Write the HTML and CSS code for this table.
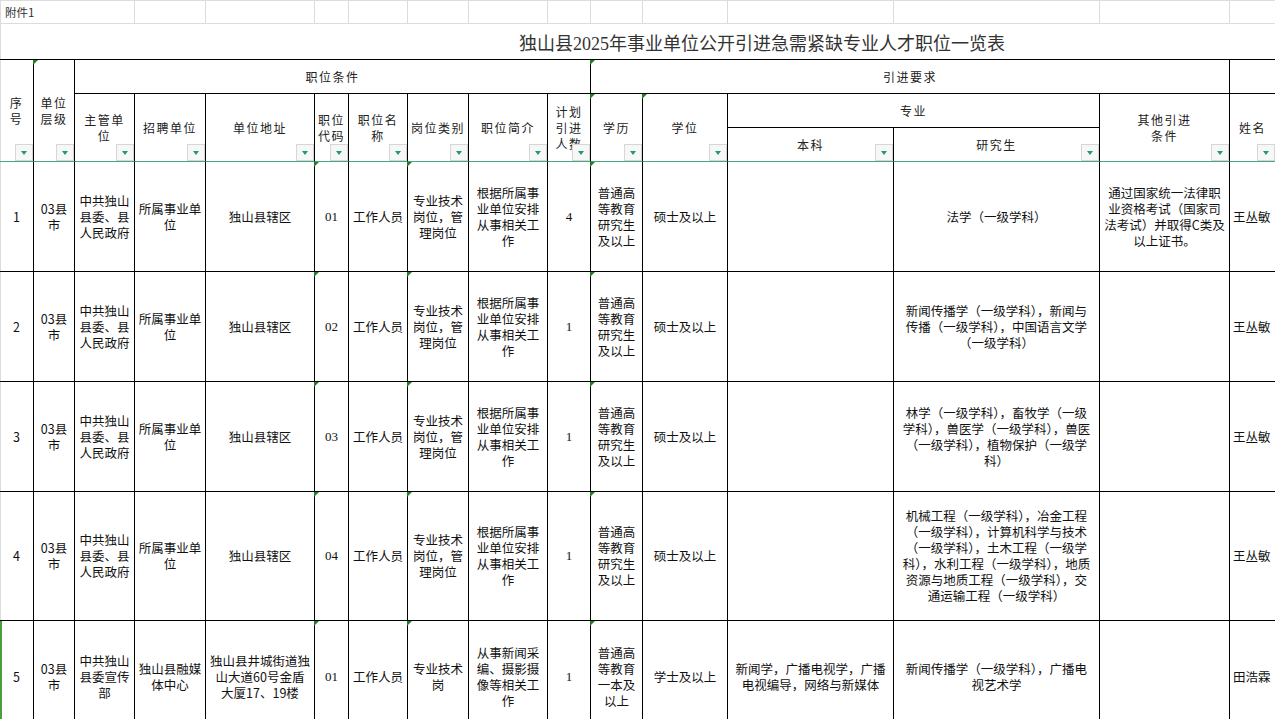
FILE: index.html
```html
<!DOCTYPE html>
<html lang="zh-CN">
<head>
<meta charset="utf-8">
<title>独山县2025年事业单位公开引进急需紧缺专业人才职位一览表</title>
<link rel="stylesheet" href="styles.css">
</head>
<body>
<div class="sheet">
  <!-- row 1 -->
  <div class="g first c3 note">附件1</div>
  <div class="g"></div><div class="g"></div><div class="g"></div><div class="g"></div><div class="g"></div>
  <div class="g"></div><div class="g"></div><div class="g"></div><div class="g"></div><div class="g"></div>
  <div class="g"></div><div class="g"></div><div class="g"></div>
  <!-- title -->
  <div class="title first">独山县2025年事业单位公开引进急需紧缺专业人才职位一览表</div>

  <!-- header row A -->
  <div class="h r3 hb first">序<br>号<span class="fb"></span></div>
  <div class="h r3 hb ct">单位<br>层级<span class="fb"></span></div>
  <div class="h c8">职位条件</div>
  <div class="h c5 ct">引进要求</div>
  <div class="h"></div>

  <!-- header row B -->
  <div class="h r2 hb">主管单<br>位<span class="fb"></span></div>
  <div class="h r2 hb">招聘单位<span class="fb"></span></div>
  <div class="h r2 hb">单位地址<span class="fb"></span></div>
  <div class="h r2 hb">职位<br>代码<span class="fb"></span></div>
  <div class="h r2 hb">职位名<br>称<span class="fb"></span></div>
  <div class="h r2 hb">岗位类别<span class="fb"></span></div>
  <div class="h r2 hb">职位简介<span class="fb"></span></div>
  <div class="h r2 hb">计划<br>引进<br>人数<span class="fb"></span></div>
  <div class="h r2 hb ct">学历<span class="fb"></span></div>
  <div class="h r2 hb ct">学位<span class="fb"></span></div>
  <div class="h c2">专业</div>
  <div class="h r2 hb">其他引进<br>条件<span class="fb"></span></div>
  <div class="h r2 hb">姓名<span class="fb"></span></div>

  <!-- header row C -->
  <div class="h hb">本科<span class="fb"></span></div>
  <div class="h hb">研究生<span class="fb"></span></div>

  <!-- data row 1 -->
  <div class="d first">1</div>
  <div class="d">03县<br>市</div>
  <div class="d">中共独山<br>县委、县<br>人民政府</div>
  <div class="d">所属事业单<br>位</div>
  <div class="d">独山县辖区</div>
  <div class="d ct num">01</div>
  <div class="d">工作人员</div>
  <div class="d ct">专业技术<br>岗位，管<br>理岗位</div>
  <div class="d">根据所属事<br>业单位安排<br>从事相关工<br>作</div>
  <div class="d num">4</div>
  <div class="d ct">普通高<br>等教育<br>研究生<br>及以上</div>
  <div class="d">硕士及以上</div>
  <div class="d"></div>
  <div class="d">法学（一级学科）</div>
  <div class="d">通过国家统一法律职<br>业资格考试（国家司<br>法考试）并取得C类及<br>以上证书。</div>
  <div class="d name">王丛敏</div>

  <!-- data row 2 -->
  <div class="d first">2</div>
  <div class="d">03县<br>市</div>
  <div class="d">中共独山<br>县委、县<br>人民政府</div>
  <div class="d">所属事业单<br>位</div>
  <div class="d">独山县辖区</div>
  <div class="d ct num">02</div>
  <div class="d">工作人员</div>
  <div class="d ct">专业技术<br>岗位，管<br>理岗位</div>
  <div class="d">根据所属事<br>业单位安排<br>从事相关工<br>作</div>
  <div class="d num">1</div>
  <div class="d ct">普通高<br>等教育<br>研究生<br>及以上</div>
  <div class="d">硕士及以上</div>
  <div class="d"></div>
  <div class="d">新闻传播学（一级学科），新闻与<br>传播（一级学科），中国语言文学<br>（一级学科）</div>
  <div class="d"></div>
  <div class="d name">王丛敏</div>

  <!-- data row 3 -->
  <div class="d first">3</div>
  <div class="d">03县<br>市</div>
  <div class="d">中共独山<br>县委、县<br>人民政府</div>
  <div class="d">所属事业单<br>位</div>
  <div class="d">独山县辖区</div>
  <div class="d ct num">03</div>
  <div class="d">工作人员</div>
  <div class="d ct">专业技术<br>岗位，管<br>理岗位</div>
  <div class="d">根据所属事<br>业单位安排<br>从事相关工<br>作</div>
  <div class="d num">1</div>
  <div class="d ct">普通高<br>等教育<br>研究生<br>及以上</div>
  <div class="d">硕士及以上</div>
  <div class="d"></div>
  <div class="d">林学（一级学科），畜牧学（一级<br>学科），兽医学（一级学科），兽医<br>（一级学科），植物保护（一级学<br>科）</div>
  <div class="d"></div>
  <div class="d name">王丛敏</div>

  <!-- data row 4 -->
  <div class="d first">4</div>
  <div class="d">03县<br>市</div>
  <div class="d">中共独山<br>县委、县<br>人民政府</div>
  <div class="d">所属事业单<br>位</div>
  <div class="d">独山县辖区</div>
  <div class="d ct num">04</div>
  <div class="d">工作人员</div>
  <div class="d ct">专业技术<br>岗位，管<br>理岗位</div>
  <div class="d">根据所属事<br>业单位安排<br>从事相关工<br>作</div>
  <div class="d num">1</div>
  <div class="d ct">普通高<br>等教育<br>研究生<br>及以上</div>
  <div class="d">硕士及以上</div>
  <div class="d"></div>
  <div class="d">机械工程（一级学科），冶金工程<br>（一级学科），计算机科学与技术<br>（一级学科），土木工程（一级学<br>科），水利工程（一级学科），地质<br>资源与地质工程（一级学科），交<br>通运输工程（一级学科）</div>
  <div class="d"></div>
  <div class="d name">王丛敏</div>

  <!-- data row 5 -->
  <div class="d first sel">5</div>
  <div class="d">03县<br>市</div>
  <div class="d">中共独山<br>县委宣传<br>部</div>
  <div class="d">独山县融媒<br>体中心</div>
  <div class="d">独山县井城街道独<br>山大道60号金盾<br>大厦17、19楼</div>
  <div class="d ct num">01</div>
  <div class="d">工作人员</div>
  <div class="d ct">专业技术<br>岗</div>
  <div class="d">从事新闻采<br>编、摄影摄<br>像等相关工<br>作</div>
  <div class="d num">1</div>
  <div class="d ct">普通高<br>等教育<br>一本及<br>以上</div>
  <div class="d">学士及以上</div>
  <div class="d">新闻学，广播电视学，广播<br>电视编导，网络与新媒体</div>
  <div class="d">新闻传播学（一级学科），广播电<br>视艺术学</div>
  <div class="d"></div>
  <div class="d name">田浩霖</div>
</div>
</body>
</html>
```

FILE: styles.css
```css
html, body {
  margin: 0;
  padding: 0;
  background: #ffffff;
  overflow: hidden;
  width: 1275px;
  height: 719px;
}

.sheet {
  display: grid;
  grid-template-columns: 34px 41px 60px 71px 109px 34px 59px 61px 79px 43px 52px 85px 166px 206px 130px 46px;
  grid-template-rows: 24px 36px 34px 34px 34px 110px 110px 110px 129px 112px;
  width: 1276px;
  font-family: "Noto Sans CJK SC", "Noto Sans", sans-serif;
  color: #111;
}

.sheet > div {
  box-sizing: border-box;
  position: relative;
}

/* spans */
.c2 { grid-column: span 2; }
.c3 { grid-column: span 3; }
.c5 { grid-column: span 5; }
.c8 { grid-column: span 8; }
.r2 { grid-row: span 2; }
.r3 { grid-row: span 3; }

/* top gridline row */
.g {
  border-top: 1px solid #dcdcdc;
  border-right: 1px solid #dcdcdc;
  border-bottom: 1px solid #dcdcdc;
}
.note {
  font-size: 11.5px;
  line-height: 22px;
  padding-left: 5px;
  color: #333;
}

.first {
  box-shadow: inset 1px 0 0 #dcdcdc;
}

.title {
  grid-column: 1 / -1;
  border-bottom: 1px solid #000;
  display: flex;
  align-items: center;
  padding-left: 519px;
  font-family: "Liberation Serif", "Noto Sans CJK SC", serif;
  font-size: 18px;
  color: #333;
  white-space: nowrap;
}

/* header cells */
.h {
  border-right: 1px solid #000;
  border-bottom: 1px solid #000;
  display: flex;
  align-items: center;
  justify-content: center;
  text-align: center;
  font-size: 12px;
  letter-spacing: 1.5px;
  line-height: 16px;
  color: #222;
}
.h.hb {
  border-bottom: 1px solid #45a883;
}

/* filter dropdown buttons */
.fb {
  position: absolute;
  right: 0;
  bottom: 0;
  width: 18px;
  height: 17px;
  box-sizing: border-box;
  border: 1px solid #d6d6d6;
  background: #f7f7f7;
}
.fb::after {
  content: "";
  position: absolute;
  left: 5px;
  top: 6px;
  border-left: 3.5px solid transparent;
  border-right: 3.5px solid transparent;
  border-top: 4px solid #1f9b6e;
}

/* comment triangles */
.ct::before {
  content: "";
  position: absolute;
  left: -1px;
  top: 0;
  width: 0;
  height: 0;
  border-top: 5px solid #237d23;
  border-right: 5px solid transparent;
  z-index: 2;
}

/* data cells */
.d {
  border-right: 1px solid #000;
  border-bottom: 1px solid #000;
  display: flex;
  align-items: center;
  justify-content: center;
  text-align: center;
  font-size: 12.5px;
  line-height: 16px;
  color: #111;
  white-space: nowrap;
}
.d.num {
  font-family: "Liberation Serif", "Noto Sans CJK SC", serif;
  font-size: 13px;
}
.d.name {
  justify-content: flex-start;
  padding-left: 3px;
}
.d.sel {
  box-shadow: inset 2px 0 0 #4a9c3c;
}
```
